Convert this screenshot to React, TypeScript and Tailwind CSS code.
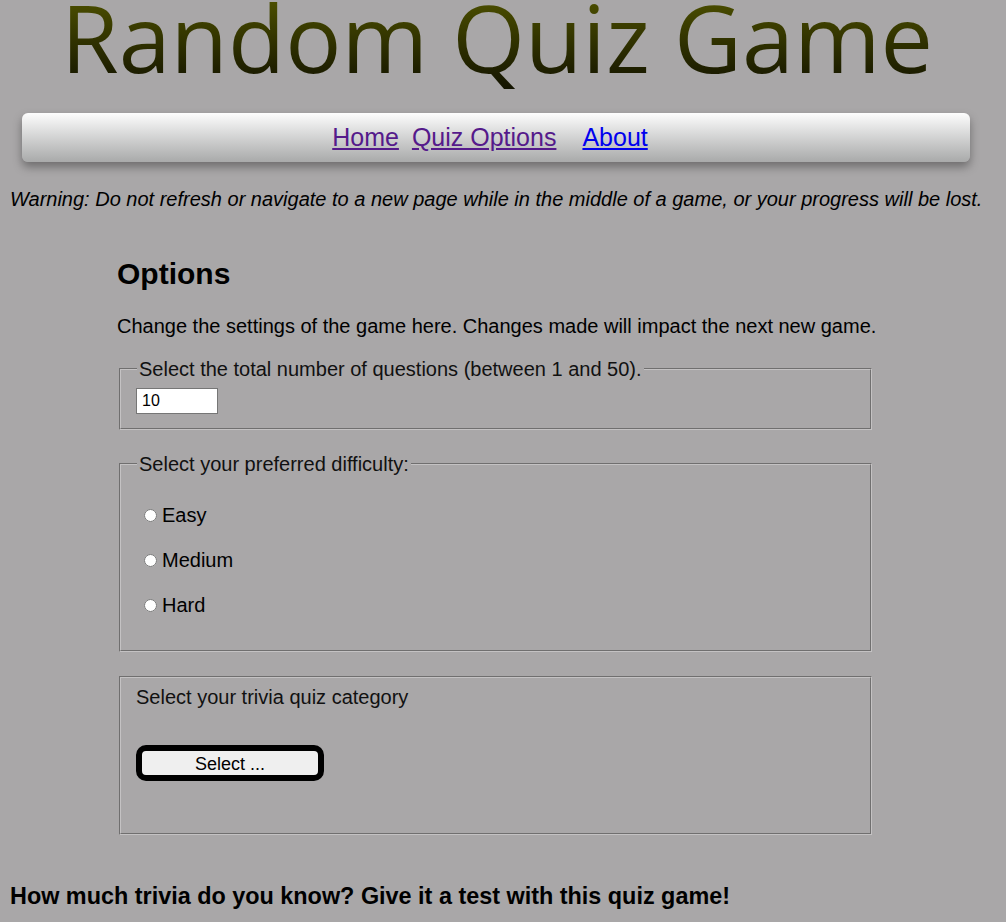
export default function App() {
  return (
    <div className="min-h-[922px] bg-[#a9a7a8] font-['Liberation_Sans',Arial,sans-serif] text-black">
      <h1 className="pr-[12px] pt-[3px] text-center font-['Open_Sans',sans-serif] text-[93.5px] leading-[68px] font-normal">
        <span className="bg-gradient-to-b from-[#5f6300] to-[#0d0d00] bg-clip-text text-transparent">
          Random Quiz Game
        </span>
      </h1>

      <nav className="ml-[22px] mt-[42px] flex h-[49px] w-[948px] items-center justify-center rounded-[6px] bg-gradient-to-b from-[#fdfdfd] to-[#a9aaaa] pr-[12px] shadow-[0_5px_10px_rgba(0,0,0,0.35)]">
        <a href="#" className="text-[25px] text-[#551a8b] underline">Home</a>
        <a href="#" className="ml-[13px] text-[25px] text-[#551a8b] underline">Quiz Options</a>
        <a href="#" className="ml-[26px] text-[25px] text-[#0000ee] underline">About</a>
      </nav>

      <p className="mt-[22px] px-[10px] text-[20px] italic">
        Warning: Do not refresh or navigate to a new page while in the middle of a game, or your progress will be lost.
      </p>

      <main className="ml-[117px] mt-[45px] w-[757px]">
        <h2 className="text-[30px] font-bold leading-[30px]">Options</h2>
        <p className="mt-[22px] whitespace-nowrap text-[20px]">
          Change the settings of the game here. Changes made will impact the next new game.
        </p>

        <fieldset className="mx-[2px] mt-[13px] border-2 border-[#c4c2c3] [border-style:groove] px-[15px] pb-[14px] pt-0 text-[20px]">
          <legend className="ml-[1px] px-[2px] text-[20px] text-[#111]">Select the total number of questions (between 1 and 50).</legend>
          <input
            type="number"
            defaultValue={10}
            className="h-[26px] w-[82px] border border-[#767676] bg-white px-[5px] text-[16px] [appearance:textfield]"
          />
        </fieldset>

        <fieldset className="mx-[2px] mt-[19px] border-2 border-[#c4c2c3] [border-style:groove] px-[15px] pb-[33px] pt-[25px] text-[20px]">
          <legend className="ml-[1px] px-[2px] text-[20px] text-[#111]">Select your preferred difficulty:</legend>
          <div className="flex flex-col gap-[22px] pl-[8px]">
            {["Easy", "Medium", "Hard"].map((d) => (
              <label key={d} className="flex items-center leading-[23px]">
                <input type="radio" name="difficulty" className="m-0 mr-[5px] h-[13px] w-[13px] accent-white" />
                {d}
              </label>
            ))}
          </div>
        </fieldset>

        <fieldset className="mx-[2px] mt-[24px] h-[159px] border-2 border-[#c4c2c3] [border-style:groove] px-[15px] pt-[4px] text-[20px]">
          <p className="text-[#111]">Select your trivia quiz category</p>
          <button className="mt-[33px] h-[36px] w-[188px] rounded-[10px] border-[6px] border-black bg-[#efefef] text-[18px]">
            Select ...
          </button>
        </fieldset>
      </main>

      <h3 className="mt-[44px] px-[10px] text-[23.4px] font-bold">
        How much trivia do you know? Give it a test with this quiz game!
      </h3>
    </div>
  );
}
